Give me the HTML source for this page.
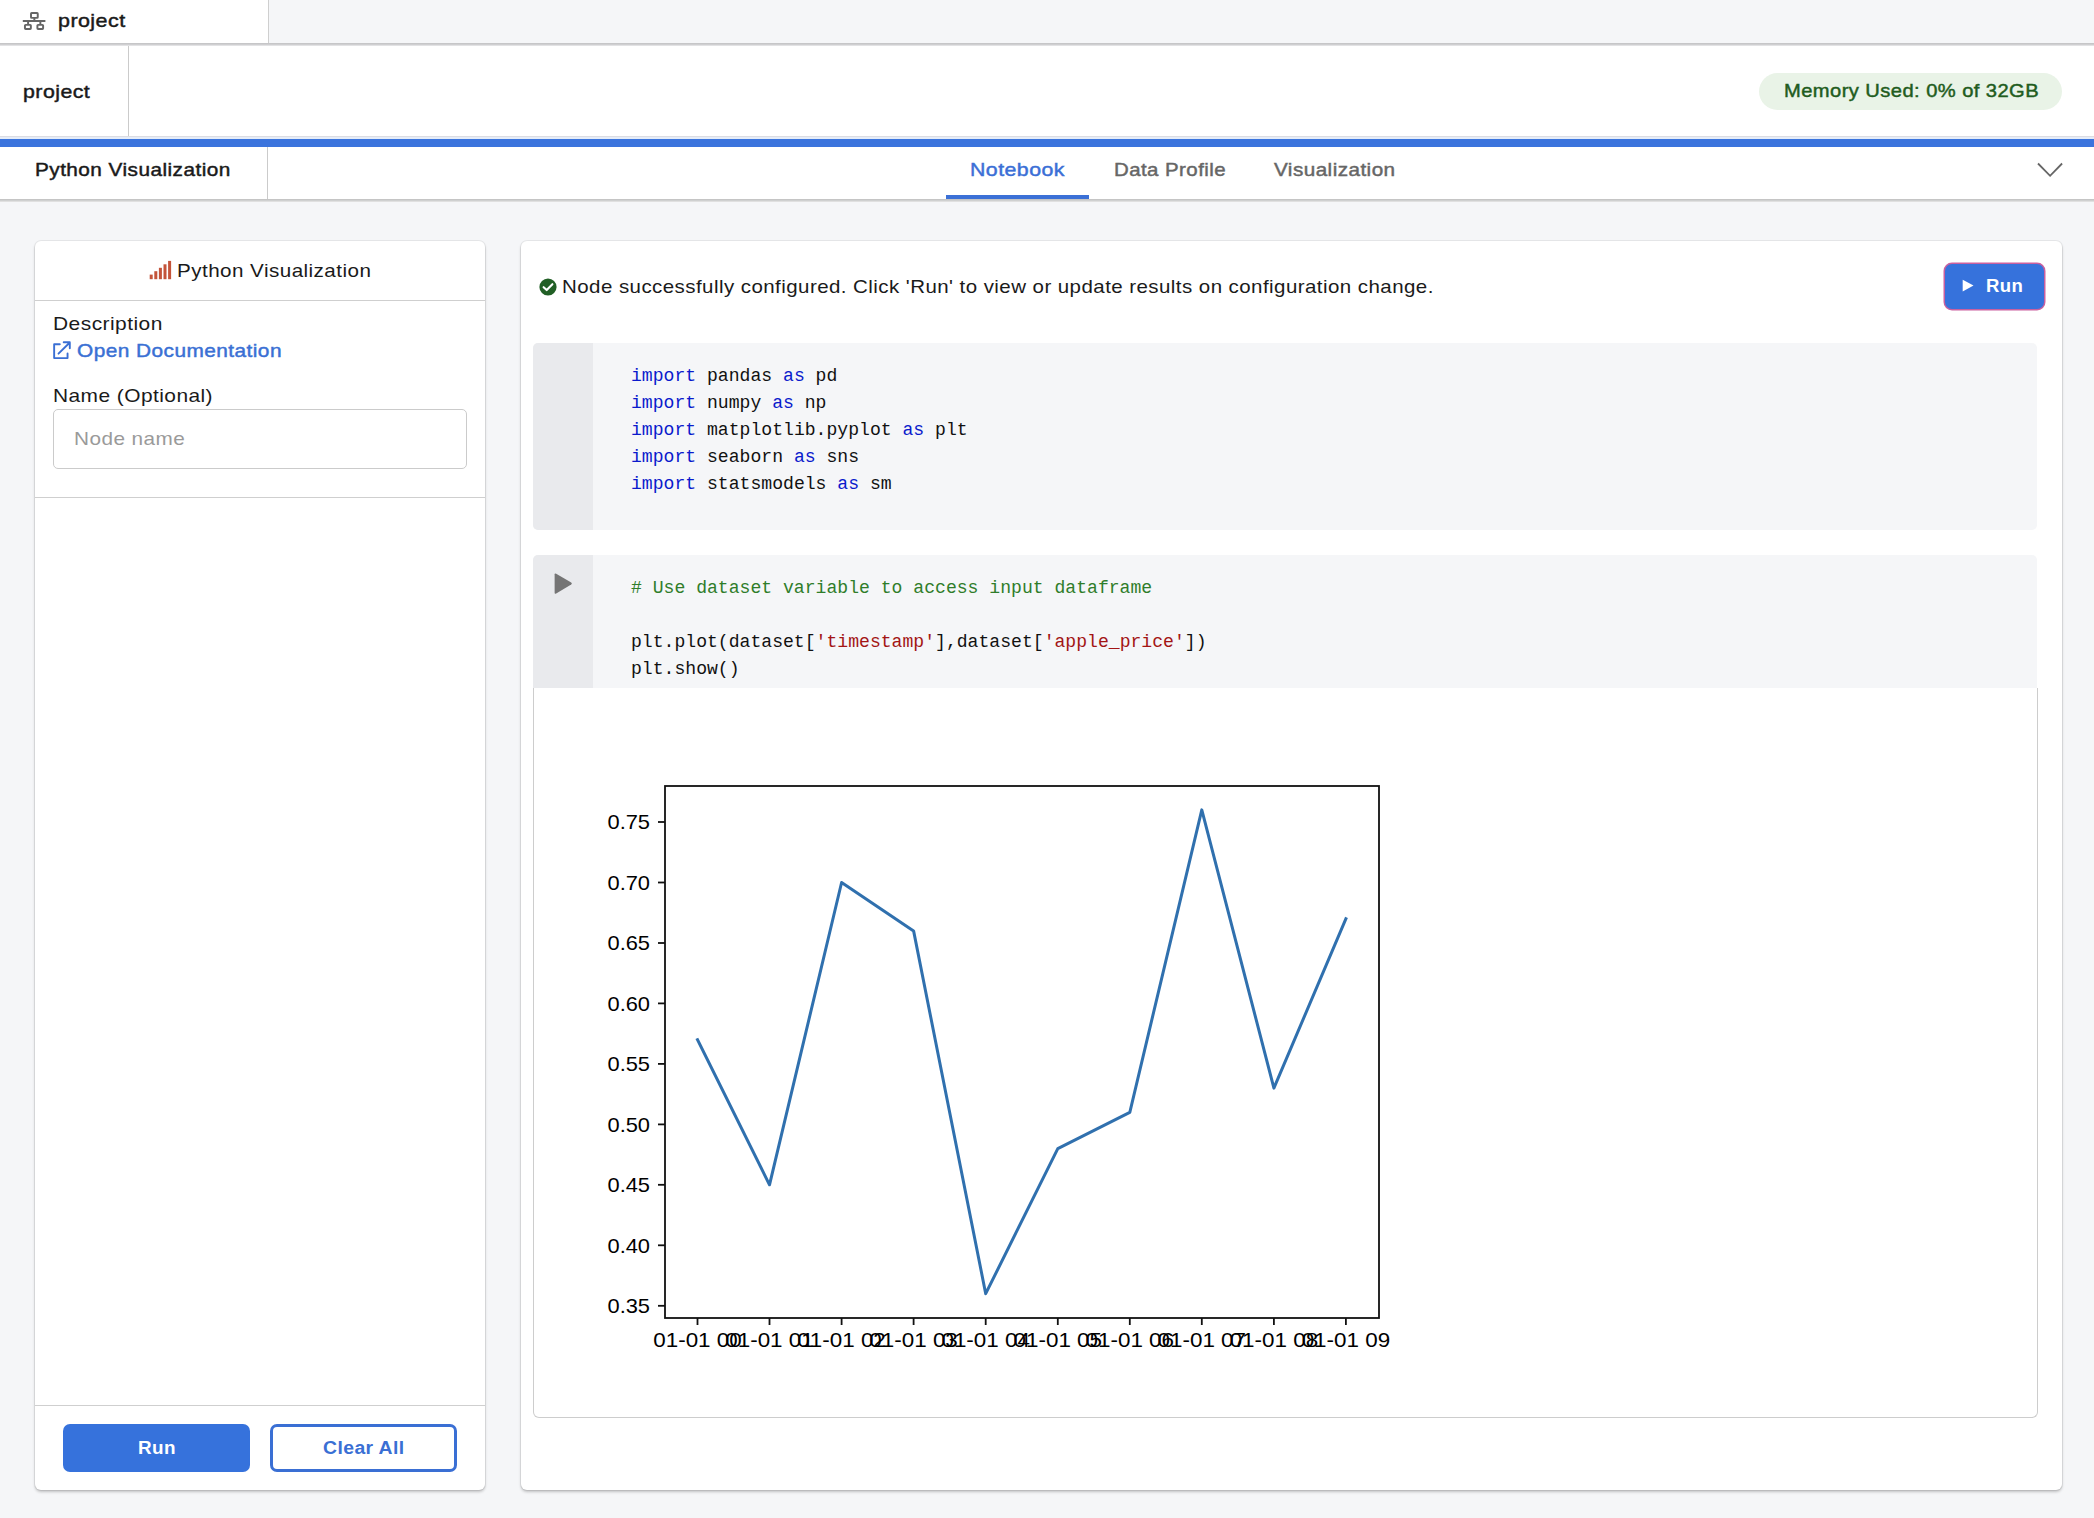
<!DOCTYPE html>
<html>
<head>
<meta charset="utf-8">
<style>
html,body{margin:0;padding:0;}
body{width:2094px;height:1518px;position:relative;overflow:hidden;background:#f5f6f8;font-family:"Liberation Sans",sans-serif;color:#1a1a1a;}
.a{position:absolute;}
.t{position:absolute;white-space:nowrap;line-height:0;transform-origin:0 0;}
.b{font-weight:bold;}
.m{-webkit-text-stroke:0.45px currentColor;}
.mono{font-family:"Liberation Mono",monospace;}
</style>
</head>
<body>
<!-- top bar -->
<div class="a" style="left:0;top:0;width:2094px;height:43px;background:#f5f6f8;"></div>
<div class="a" style="left:0;top:0;width:268px;height:43px;background:#fff;"></div>
<div class="a" style="left:268px;top:0;width:1px;height:43px;background:#cfcfcf;"></div>
<div class="a" style="left:0;top:43px;width:2094px;height:1px;background:#c6c6c8;"></div>
<div class="a" style="left:0;top:44px;width:2094px;height:1px;background:#cfcfd1;"></div>
<div class="a" style="left:0;top:45px;width:2094px;height:1px;background:#e2e2e4;"></div>
<svg class="a" style="left:22px;top:11px;" width="24" height="20" viewBox="0 0 24 20">
  <g fill="none" stroke="#666" stroke-width="1.95">
    <rect x="9" y="1.95" width="6.75" height="4.9" rx="0.7"/>
    <rect x="2.95" y="13.85" width="5.9" height="4.1" rx="0.7"/>
    <rect x="15.4" y="13.85" width="5.7" height="4.1" rx="0.7"/>
    <path d="M12.35 6.9V10M0.8 10H23.4M6.1 10V13.9M18.35 10V13.9"/>
  </g>
</svg>
<div class="t m" id="t_proj1" style="left:58.20px;top:21.00px;font-size:18.6px;letter-spacing:0.4px;transform:scaleX(1.1531);">project</div>

<!-- second bar -->
<div class="a" style="left:0;top:46px;width:2094px;height:90px;background:#fff;"></div>
<div class="a" style="left:128px;top:46px;width:1px;height:90px;background:#cbcbcb;"></div>
<div class="a" style="left:0;top:136px;width:2094px;height:1px;background:#dcdce2;"></div>
<div class="a" style="left:0;top:137px;width:2094px;height:2px;background:#e4ecf8;"></div>
<div class="t m" id="t_proj2" style="left:22.90px;top:92.10px;font-size:18.6px;letter-spacing:0.4px;transform:scaleX(1.1467);">project</div>
<div class="a" style="left:1759px;top:73px;width:303px;height:37px;border-radius:19px;background:#e9f3e7;"></div>
<div class="t m" id="t_mem" style="left:1783.50px;top:91.40px;font-size:18.6px;letter-spacing:0.4px;color:#1f5c20;transform:scaleX(1.0830);">Memory Used: 0% of 32GB</div>

<!-- blue bar -->
<div class="a" style="left:0;top:139px;width:2094px;height:8px;background:#3b74dd;"></div>

<!-- tab row -->
<div class="a" style="left:0;top:147px;width:2094px;height:52px;background:#fff;"></div>
<div class="a" style="left:267px;top:147px;width:1px;height:52px;background:#cbcbcb;"></div>
<div class="a" style="left:0;top:199px;width:2094px;height:1px;background:#c5c5c5;"></div>
<div class="a" style="left:0;top:200px;width:2094px;height:1px;background:#cfd0d0;"></div>
<div class="a" style="left:0;top:201px;width:2094px;height:1px;background:#e0e0e0;"></div>
<div class="t m" id="t_tabtitle" style="left:35.40px;top:170.00px;font-size:18.6px;letter-spacing:0.4px;transform:scaleX(1.1176);">Python Visualization</div>
<div class="t m" id="t_nb" style="left:970.10px;top:169.60px;font-size:18.6px;letter-spacing:0.4px;color:#3b6fd6;transform:scaleX(1.1463);">Notebook</div>
<div class="t m" id="t_dp" style="left:1113.80px;top:169.60px;font-size:18.6px;letter-spacing:0.4px;color:#666;transform:scaleX(1.0990);">Data Profile</div>
<div class="t m" id="t_vis" style="left:1273.90px;top:169.76px;font-size:18.6px;letter-spacing:0.4px;color:#666;transform:scaleX(1.1123);">Visualization</div>
<div class="a" style="left:946px;top:195px;width:143px;height:4px;background:#3b70d6;"></div>
<svg class="a" style="left:2034px;top:158px;" width="32" height="22" viewBox="0 0 32 22">
  <path d="M4 5.5L16.1 17.8L28.1 5.5" fill="none" stroke="#666" stroke-width="1.8"/>
</svg>

<!-- left card -->
<div class="a" style="left:35px;top:241px;width:450px;height:1249px;background:#fff;border-radius:6px;box-shadow:0 0 0 1px rgba(0,0,0,0.06),0 2px 3px rgba(0,0,0,0.22);"></div>
<div class="a" style="left:35px;top:300px;width:450px;height:1px;background:#cfcfcf;"></div>
<div class="a" style="left:35px;top:497px;width:450px;height:1px;background:#cfcfcf;"></div>
<div class="a" style="left:35px;top:1405px;width:450px;height:1px;background:#cfcfcf;"></div>
<svg class="a" style="left:149px;top:260px;" width="24" height="20" viewBox="0 0 24 20">
  <g fill="#c4543a">
    <rect x="0.7" y="14.6" width="3" height="4.6"/>
    <rect x="5.3" y="11.2" width="3" height="8"/>
    <rect x="9.9" y="7.8" width="3" height="11.4"/>
    <rect x="14.5" y="4.3" width="3" height="14.9"/>
    <rect x="19.1" y="0.9" width="3" height="18.3"/>
  </g>
</svg>
<div class="t" id="t_hdr" style="left:177.00px;top:270.50px;font-size:18.6px;letter-spacing:0.4px;transform:scaleX(1.1098);">Python Visualization</div>
<div class="t" id="t_desc" style="left:52.70px;top:323.60px;font-size:18.6px;letter-spacing:0.4px;transform:scaleX(1.1273);">Description</div>
<svg class="a" style="left:50px;top:338px;" width="24" height="24" viewBox="0 0 24 24">
  <g fill="none" stroke="#3a6fd4" stroke-width="1.9" stroke-linecap="round" stroke-linejoin="round">
    <path d="M9.8 6.3H4.15V20.1H17.55V15.5"/>
    <path d="M8.5 15.7L19.8 4.5M13.7 4.3H19.8V10.2"/>
  </g>
</svg>
<div class="t m" id="t_doc" style="left:76.70px;top:351.00px;font-size:18.6px;letter-spacing:0.4px;color:#3a70d4;transform:scaleX(1.1204);">Open Documentation</div>
<div class="t" id="t_name" style="left:52.70px;top:395.90px;font-size:18.6px;letter-spacing:0.4px;transform:scaleX(1.1238);">Name (Optional)</div>
<div class="a" style="left:53px;top:409px;width:412px;height:58px;border:1px solid #cbcbcb;border-radius:5px;background:#fff;"></div>
<div class="t" id="t_nn" style="left:73.60px;top:438.60px;font-size:19.0px;letter-spacing:0.4px;color:#9a9a9a;transform:scaleX(1.0921);">Node name</div>
<div class="a" style="left:63px;top:1424px;width:187px;height:48px;border-radius:7px;background:#3672dc;"></div>
<div class="t b" id="t_run2" style="left:137.60px;top:1447.70px;font-size:18.8px;letter-spacing:0.4px;color:#fff;transform:scaleX(1.0041);">Run</div>
<div class="a" style="left:270px;top:1424px;width:181px;height:42px;border:3px solid #3a6fd4;border-radius:7px;background:#fff;"></div>
<div class="t b" id="t_clear" style="left:322.50px;top:1447.70px;font-size:18.8px;letter-spacing:0.4px;color:#3a6fd4;transform:scaleX(1.0316);">Clear All</div>

<!-- right card -->
<div class="a" style="left:521px;top:241px;width:1541px;height:1249px;background:#fff;border-radius:6px;box-shadow:0 0 0 1px rgba(0,0,0,0.06),0 2px 3px rgba(0,0,0,0.22);"></div>
<svg class="a" style="left:538px;top:276.5px;" width="20" height="20" viewBox="0 0 20 20">
  <circle cx="10" cy="10" r="8.6" fill="#215f25"/>
  <path d="M5.6 10.2L8.7 13.1L14.4 7.2" fill="none" stroke="#fff" stroke-width="2.1" stroke-linecap="round" stroke-linejoin="round"/>
</svg>
<div class="t" id="t_status" style="left:561.80px;top:287.20px;font-size:18.6px;letter-spacing:0.4px;transform:scaleX(1.1019);">Node successfully configured. Click 'Run' to view or update results on configuration change.</div>
<div class="a" style="left:1945px;top:264px;width:99px;height:45px;border-radius:7px;background:#3672dc;box-shadow:0 0 0 1.5px #c9609f;"></div>
<svg class="a" style="left:1960px;top:277px;" width="16" height="17" viewBox="0 0 16 17">
  <path d="M2.7 2.8L13.5 8.6L2.7 14.5Z" fill="#fff"/>
</svg>
<div class="t b" id="t_run1" style="left:1985.50px;top:285.60px;font-size:18.9px;letter-spacing:0.4px;color:#fff;transform:scaleX(0.9814);">Run</div>

<!-- code cell 1 -->
<div class="a" style="left:533px;top:343px;width:1504px;height:187px;background:#f5f6f8;border-radius:5px;overflow:hidden;">
  <div class="a" style="left:0;top:0;width:60px;height:187px;background:#e9eaed;"></div>
</div>
<div class="mono a" id="code1" style="left:631px;top:362.5px;font-size:18.1px;line-height:27px;white-space:pre;color:#111;"><span style="color:#0a1acc">import</span> pandas <span style="color:#0a1acc">as</span> pd
<span style="color:#0a1acc">import</span> numpy <span style="color:#0a1acc">as</span> np
<span style="color:#0a1acc">import</span> matplotlib.pyplot <span style="color:#0a1acc">as</span> plt
<span style="color:#0a1acc">import</span> seaborn <span style="color:#0a1acc">as</span> sns
<span style="color:#0a1acc">import</span> statsmodels <span style="color:#0a1acc">as</span> sm</div>

<!-- code cell 2 -->
<div class="a" style="left:533px;top:555px;width:1504px;height:133px;background:#f5f6f8;border-radius:5px 5px 0 0;overflow:hidden;">
  <div class="a" style="left:0;top:0;width:60px;height:133px;background:#e9eaed;"></div>
</div>
<svg class="a" style="left:550px;top:570px;" width="26" height="28" viewBox="0 0 26 28">
  <path d="M4.6 4.6Q4.6 2.8 6.2 3.7L21.2 12.6Q22.6 13.5 21.2 14.4L6.2 23.5Q4.6 24.4 4.6 22.6Z" fill="#757575"/>
</svg>
<div class="mono a" id="code2" style="left:631px;top:574.5px;font-size:18.1px;line-height:27px;white-space:pre;color:#111;"><span style="color:#2f7d2a"># Use dataset variable to access input dataframe</span>

plt.plot(dataset[<span style="color:#a31515">'timestamp'</span>],dataset[<span style="color:#a31515">'apple_price'</span>])
plt.show()</div>

<!-- output -->
<div class="a" style="left:533px;top:688px;width:1503px;height:729px;border:1px solid #cdcdcd;border-top:none;border-radius:0 0 6px 6px;background:#fff;"></div>

<!-- chart -->
<svg class="a" id="chart" style="left:580px;top:760px;" width="840" height="620" viewBox="580 760 840 620">
<g font-family="Liberation Sans" fill="#000">
<rect x="665" y="786" width="714" height="532" fill="none" stroke="#111" stroke-width="1.8"/>
<polyline points="697.5,1039.7 769.5,1184.8 841.6,882.5 913.6,930.9 985.7,1293.7 1057.8,1148.6 1129.8,1112.3 1201.8,809.9 1273.9,1088.1 1345.9,918.8" fill="none" stroke="#3070ae" stroke-width="3" stroke-linejoin="round" stroke-linecap="square"/>
<path d="M658 822.0H665" stroke="#111" stroke-width="1.8"/>
<text x="650" y="829.4" text-anchor="end" font-size="21" textLength="42.5" lengthAdjust="spacingAndGlyphs">0.75</text>
<path d="M658 882.5H665" stroke="#111" stroke-width="1.8"/>
<text x="650" y="889.9" text-anchor="end" font-size="21" textLength="42.5" lengthAdjust="spacingAndGlyphs">0.70</text>
<path d="M658 943.0H665" stroke="#111" stroke-width="1.8"/>
<text x="650" y="950.4" text-anchor="end" font-size="21" textLength="42.5" lengthAdjust="spacingAndGlyphs">0.65</text>
<path d="M658 1003.4H665" stroke="#111" stroke-width="1.8"/>
<text x="650" y="1010.8" text-anchor="end" font-size="21" textLength="42.5" lengthAdjust="spacingAndGlyphs">0.60</text>
<path d="M658 1063.9H665" stroke="#111" stroke-width="1.8"/>
<text x="650" y="1071.3" text-anchor="end" font-size="21" textLength="42.5" lengthAdjust="spacingAndGlyphs">0.55</text>
<path d="M658 1124.4H665" stroke="#111" stroke-width="1.8"/>
<text x="650" y="1131.8" text-anchor="end" font-size="21" textLength="42.5" lengthAdjust="spacingAndGlyphs">0.50</text>
<path d="M658 1184.8H665" stroke="#111" stroke-width="1.8"/>
<text x="650" y="1192.2" text-anchor="end" font-size="21" textLength="42.5" lengthAdjust="spacingAndGlyphs">0.45</text>
<path d="M658 1245.3H665" stroke="#111" stroke-width="1.8"/>
<text x="650" y="1252.7" text-anchor="end" font-size="21" textLength="42.5" lengthAdjust="spacingAndGlyphs">0.40</text>
<path d="M658 1305.8H665" stroke="#111" stroke-width="1.8"/>
<text x="650" y="1313.2" text-anchor="end" font-size="21" textLength="42.5" lengthAdjust="spacingAndGlyphs">0.35</text>
<path d="M697.5 1318V1325" stroke="#111" stroke-width="1.8"/>
<text x="697.5" y="1347.2" text-anchor="middle" font-size="20.5" textLength="88.5" lengthAdjust="spacingAndGlyphs">01-01 00</text>
<path d="M769.5 1318V1325" stroke="#111" stroke-width="1.8"/>
<text x="769.5" y="1347.2" text-anchor="middle" font-size="20.5" textLength="88.5" lengthAdjust="spacingAndGlyphs">01-01 01</text>
<path d="M841.6 1318V1325" stroke="#111" stroke-width="1.8"/>
<text x="841.6" y="1347.2" text-anchor="middle" font-size="20.5" textLength="88.5" lengthAdjust="spacingAndGlyphs">01-01 02</text>
<path d="M913.6 1318V1325" stroke="#111" stroke-width="1.8"/>
<text x="913.6" y="1347.2" text-anchor="middle" font-size="20.5" textLength="88.5" lengthAdjust="spacingAndGlyphs">01-01 03</text>
<path d="M985.7 1318V1325" stroke="#111" stroke-width="1.8"/>
<text x="985.7" y="1347.2" text-anchor="middle" font-size="20.5" textLength="88.5" lengthAdjust="spacingAndGlyphs">01-01 04</text>
<path d="M1057.8 1318V1325" stroke="#111" stroke-width="1.8"/>
<text x="1057.8" y="1347.2" text-anchor="middle" font-size="20.5" textLength="88.5" lengthAdjust="spacingAndGlyphs">01-01 05</text>
<path d="M1129.8 1318V1325" stroke="#111" stroke-width="1.8"/>
<text x="1129.8" y="1347.2" text-anchor="middle" font-size="20.5" textLength="88.5" lengthAdjust="spacingAndGlyphs">01-01 06</text>
<path d="M1201.8 1318V1325" stroke="#111" stroke-width="1.8"/>
<text x="1201.8" y="1347.2" text-anchor="middle" font-size="20.5" textLength="88.5" lengthAdjust="spacingAndGlyphs">01-01 07</text>
<path d="M1273.9 1318V1325" stroke="#111" stroke-width="1.8"/>
<text x="1273.9" y="1347.2" text-anchor="middle" font-size="20.5" textLength="88.5" lengthAdjust="spacingAndGlyphs">01-01 08</text>
<path d="M1345.9 1318V1325" stroke="#111" stroke-width="1.8"/>
<text x="1345.9" y="1347.2" text-anchor="middle" font-size="20.5" textLength="88.5" lengthAdjust="spacingAndGlyphs">01-01 09</text>
</g>
</svg>

</body>
</html>
